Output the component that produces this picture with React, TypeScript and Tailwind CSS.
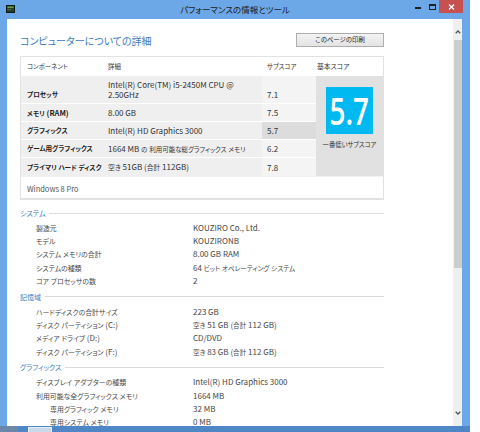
import React from "react";

const JP = "font-['Noto_Sans_CJK_JP','Noto_Sans',sans-serif] [font-feature-settings:'palt']";

type Row = { label: string; value: string; indent?: boolean };

const sections: { title: string; rows: Row[] }[] = [
  {
    title: "システム",
    rows: [
      { label: "製造元", value: "KOUZIRO Co., Ltd." },
      { label: "モデル", value: "KOUZIRONB" },
      { label: "システム メモリの合計", value: "8.00 GB RAM" },
      { label: "システムの種類", value: "64 ビット オペレーティング システム" },
      { label: "コア プロセッサの数", value: "2" },
    ],
  },
  {
    title: "記憶域",
    rows: [
      { label: "ハードディスクの合計サイズ", value: "223 GB" },
      { label: "ディスク パーティション (C:)", value: "空き 51 GB (合計 112 GB)" },
      { label: "メディア ドライブ (D:)", value: "CD/DVD" },
      { label: "ディスク パーティション (F:)", value: "空き 83 GB (合計 112 GB)" },
    ],
  },
  {
    title: "グラフィックス",
    rows: [
      { label: "ディスプレイ アダプターの種類", value: "Intel(R) HD Graphics 3000" },
      { label: "利用可能な全グラフィックス メモリ", value: "1664 MB" },
      { label: "専用グラフィック メモリ", value: "32 MB", indent: true },
      { label: "専用システム メモリ", value: "0 MB", indent: true },
    ],
  },
];

/** Renders Japanese runs at a smaller size than the Latin runs around them. */
function M({ t, j }: { t: string; j: string }) {
  const parts = t.split(/([\u3000-\u30ff\u3400-\u9fff\uff00-\uffef]+)/);
  return (
    <>
      {parts.map((p, i) =>
        i % 2 === 1 ? (
          <span key={i} className={j}>
            {p}
          </span>
        ) : (
          <React.Fragment key={i}>{p}</React.Fragment>
        )
      )}
    </>
  );
}

function TitleBar() {
  return (
    <div className="h-[19px] flex items-start shrink-0">
      <div className="w-[60px] pl-[6px] pt-[5px]">
        <svg width="9" height="8" viewBox="0 0 9 8">
          <rect x="0.5" y="0.5" width="8" height="7" fill="#24402c" stroke="#0e1a12" />
          <rect x="1.5" y="1.5" width="6" height="1.5" fill="#5fa05a" />
          <rect x="1.5" y="4" width="4" height="1" fill="#3e6e45" />
        </svg>
      </div>
      <div className="flex-1 text-center text-[8.5px] leading-[19px] text-[#1b1b1b]">
        パフォーマンスの情報とツール
      </div>
      <div className="w-[60px] flex items-start justify-end pr-[7px]">
        <div className="w-[14px] h-[13px] flex items-center justify-center">
          <div className="w-[6px] h-[2px] bg-[#1f1f1f] mt-[2px]" />
        </div>
        <div className="w-[14px] h-[13px] flex items-center justify-center">
          <div className="w-[7px] h-[6px] border border-[#1f1f1f] border-t-2" />
        </div>
        <div className="w-[24px] h-[13px] bg-[#c75050] flex items-center justify-center">
          <svg width="7" height="6" viewBox="0 0 7 6">
            <path d="M1 0.5 L6 5.5 M6 0.5 L1 5.5" stroke="#fff" strokeWidth="1.4" />
          </svg>
        </div>
      </div>
    </div>
  );
}

function Scrollbar() {
  return (
    <div className="w-[9px] bg-[#efefef] flex flex-col items-stretch">
      <div className="h-[21px] flex items-center justify-center pt-[4px]">
        <svg width="6" height="4" viewBox="0 0 6 4">
          <path d="M0.7 3.3 L3 1 L5.3 3.3" stroke="#555" strokeWidth="1.3" fill="none" />
        </svg>
      </div>
      <div className="h-[228px] bg-[#cdcdcd] mx-[0.5px]" />
      <div className="flex-1" />
      <div className="h-[21px] flex items-center justify-center pb-[6px]">
        <svg width="6" height="4" viewBox="0 0 6 4">
          <path d="M0.7 0.7 L3 3 L5.3 0.7" stroke="#555" strokeWidth="1.3" fill="none" />
        </svg>
      </div>
    </div>
  );
}

function ScoreTable() {
  const lab = "flex items-center pl-[6px] bg-[#efefef] font-bold text-[#1e1e1e] text-[6.6px] whitespace-nowrap";
  const det = "flex items-center pl-[4px] bg-[#efefef] text-[#333] whitespace-nowrap";
  const sub = "flex items-center pl-[5px] text-[#333]";
  return (
    <div className="mt-[9px] w-[364px] border border-[#e2e2e2] border-b-2 bg-white text-[8px]">
      <div className="grid grid-cols-[83px_158px_54px_67px] h-[19px] items-center text-[#333] text-[6.4px]">
        <div className="pl-[6px]">コンポーネント</div>
        <div className="pl-[4px]">詳細</div>
        <div className="pl-[5px]">サブスコア</div>
        <div className="pl-[1px] text-[6.8px]">基本スコア</div>
      </div>
      <div className="grid grid-cols-[83px_158px_54px_67px] grid-rows-[27px_17px_17px_17px_18px] gap-y-px bg-white leading-[9px]">
        <div className={`${lab} items-end pb-[4px]`}>プロセッサ</div>
        <div className={det}>
          <div className="leading-[9.5px]">
            Intel(R) Core(TM) i5-2450M CPU @
            <br />
            2.50GHz
          </div>
        </div>
        <div className={`${sub} items-end pb-[4px] bg-[#f4f4f4]`}>7.1</div>
        <div className="row-span-5 col-start-4 row-start-1 bg-[#e1e1e1] flex flex-col items-center pt-[11px]">
          <div className="w-[47px] h-[47px] bg-[#00b9f1] flex items-center justify-center">
            <span className="text-white text-[37px] leading-none font-['Open_Sans',sans-serif] font-semibold scale-x-[0.75]">5.7</span>
          </div>
          <div className="mt-[6px] text-[6.3px] text-[#333] whitespace-nowrap">一番低いサブスコア</div>
        </div>

        <div className="flex items-center pl-[6px] bg-[#efefef] font-bold text-[#1e1e1e] text-[7.6px] whitespace-nowrap">
          <span>
            <M t="メモリ (RAM)" j="text-[6.6px]" />
          </span>
        </div>
        <div className={det}>8.00 GB</div>
        <div className={`${sub} bg-[#f4f4f4]`}>7.5</div>

        <div className={lab}>グラフィックス</div>
        <div className={det}>Intel(R) HD Graphics 3000</div>
        <div className={`${sub} bg-[#dcdcdc]`}>5.7</div>

        <div className={lab}>ゲーム用グラフィックス</div>
        <div className={det}>
          <span>
            <M t="1664 MB の 利用可能な総グラフィックス メモリ" j="text-[6.5px]" />
          </span>
        </div>
        <div className={`${sub} bg-[#f4f4f4]`}>6.2</div>

        <div className={lab}>プライマリ ハード ディスク</div>
        <div className={det}>
          <span>
            <M t="空き 51GB (合計 112GB)" j="text-[6.8px]" />
          </span>
        </div>
        <div className={`${sub} bg-[#f4f4f4]`}>7.8</div>
      </div>
      <div className="h-[22px] flex items-center pt-[3px] pl-[6px] text-[#555] text-[7.5px] border-t border-[#f2f2f2]">
        Windows 8 Pro
      </div>
    </div>
  );
}

function Section({ title, rows, first }: { title: string; rows: Row[]; first?: boolean }) {
  return (
    <div className={first ? "mt-[7px]" : "mt-[3px]"}>
      <div className="flex items-center h-[12px] w-[364px] gap-[4px]">
        <span className="text-[7px] text-[#3a7cc2]">{title}</span>
        <div className="flex-1 h-px bg-[#dadada]" />
      </div>
      <div className="mt-[2px] flex flex-col">
        {rows.map((r) => (
          <div key={r.label} className="flex h-[13.4px] items-center text-[8px] text-[#474747]">
            <div className={`w-[173px] whitespace-nowrap ${r.indent ? "pl-[30px]" : "pl-[16px]"}`}>
              <M t={r.label} j="text-[6.9px]" />
            </div>
            <div className="whitespace-nowrap">
              <M t={r.value} j="text-[6.6px]" />
            </div>
          </div>
        ))}
      </div>
    </div>
  );
}

export default function App() {
  return (
    <div className={`w-[480px] h-[432px] bg-white overflow-hidden flex ${JP}`}>
      <div className="w-[470px] h-full bg-[#6ca7e8] flex flex-col">
        <TitleBar />
        <div className="flex flex-1 min-h-0 pl-[7px] pr-[8px]">
          <div className="flex-1 bg-white overflow-hidden pl-[13px] pt-[14px]">
            <div className="w-[364px] h-[14px] flex items-center justify-between">
              <span className="text-[10px] text-[#3a7cc2]">コンピューターについての詳細</span>
              <button className="w-[88px] h-[14px] border border-[#adadad] bg-gradient-to-b from-[#f3f3f3] to-[#e3e3e3] text-[6.4px] text-[#222] leading-none">
                このページの印刷
              </button>
            </div>
            <ScoreTable />
            {sections.map((s, i) => (
              <Section key={s.title} title={s.title} rows={s.rows} first={i === 0} />
            ))}
          </div>
          <Scrollbar />
        </div>
        <div className="h-[6px] bg-[#4f86c6] flex items-end gap-[10px] shrink-0">
          <div className="w-[18px] h-[6px] bg-[#6c87a8]" />
          <div className="w-[24px] h-[5px] bg-[#c9d8ea] border-t border-x border-[#e8eef6]" />
        </div>
      </div>
    </div>
  );
}
